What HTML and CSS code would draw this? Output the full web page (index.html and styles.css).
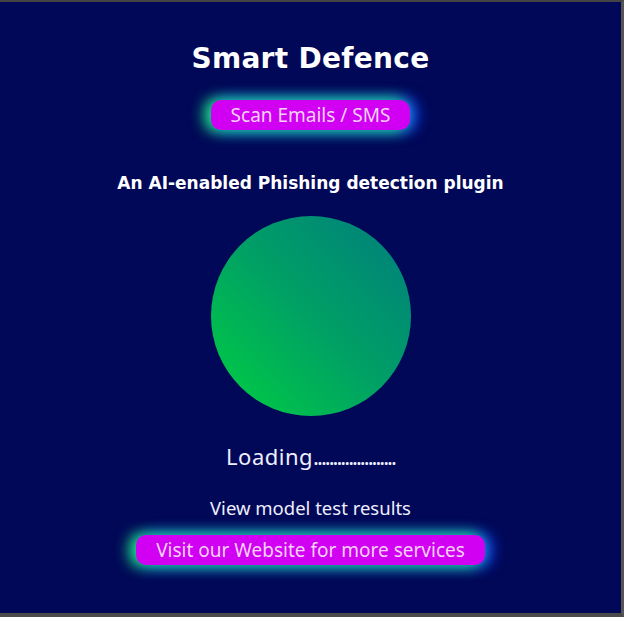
FILE: index.html
```html
<!DOCTYPE html>
<html>
<head>
<meta charset="utf-8">
<link rel="stylesheet" href="styles.css">
</head>
<body>
<div class="frame">
  <main class="content">
    <h1 class="title">Smart Defence</h1>
    <button class="pill">Scan Emails / SMS</button>
    <h2 class="subtitle">An AI-enabled Phishing detection plugin</h2>
    <div class="orb"></div>
    <p class="loading">Loading<span class="dots">.....................</span></p>
    <p class="link">View model test results</p>
    <button class="pill wide">Visit our Website for more services</button>
  </main>
</div>
</body>
</html>
```
FILE: styles.css
```css
html, body {
  margin: 0;
  padding: 0;
  background: #3a3a3a;
}
.frame {
  box-sizing: border-box;
  width: 624px;
  height: 617px;
  border-top: 2px solid #444;
  border-right: 3px solid #555;
  border-bottom: 4px solid #4a4a4a;
  background: #010857;
  overflow: hidden;
}
.content {
  display: flex;
  flex-direction: column;
  align-items: center;
  width: 621px;
  font-family: "Noto Sans", "Open Sans", sans-serif;
  color: #fff;
}
.title {
  margin: 40px 0 0;
  font-family: "DejaVu Sans", sans-serif;
  font-weight: bold;
  font-size: 28px;
  line-height: 34px;
  letter-spacing: 0.3px;
}
.pill {
  margin-top: 24px;
  height: 30px;
  padding: 0 20px;
  border: none;
  border-radius: 10px;
  background: #d200f3;
  color: #f6d2f8;
  font-family: "Noto Sans", "Open Sans", sans-serif;
  font-size: 19px;
  line-height: 30px;
  box-shadow: -5px 0 14px 2px rgba(30, 255, 130, 0.85), 5px 0 14px 2px rgba(20, 70, 255, 0.95);
}
.subtitle {
  margin: 42px 0 0;
  font-family: "DejaVu Sans", sans-serif;
  font-weight: bold;
  font-size: 17px;
  line-height: 22px;
}
.orb {
  margin-top: 22px;
  width: 200px;
  height: 200px;
  border-radius: 50%;
  background: linear-gradient(to top right, #00d040 0%, #00a065 50%, #007d7e 100%);
}
.loading {
  margin: 24px 0 0;
  font-size: 22px;
  line-height: 32px;
  color: #eef;
  letter-spacing: 0.5px;
}
.dots {
  letter-spacing: -2px;
}
.link {
  margin: 24px 0 0;
  font-size: 18.5px;
  line-height: 24px;
  color: #eef;
}
.pill.wide {
  margin-top: 15px;
}
```
